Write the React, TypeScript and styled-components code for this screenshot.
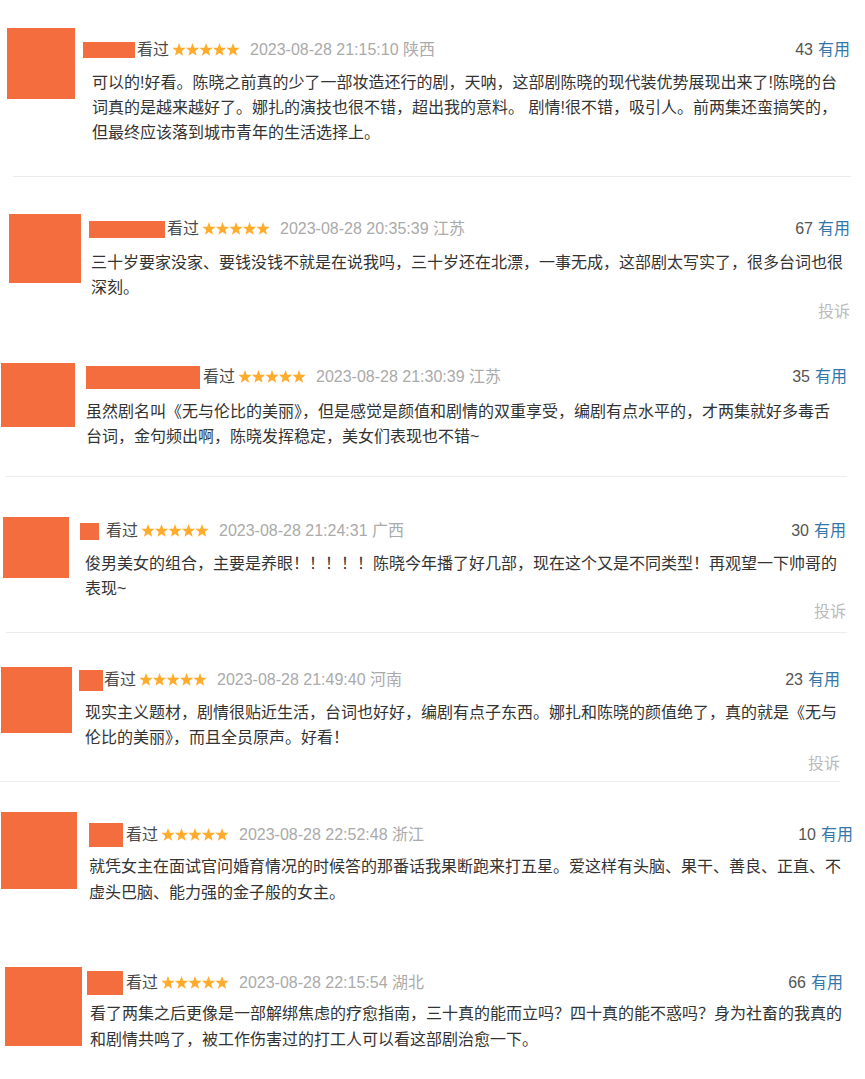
import React from "react";
import styled, { createGlobalStyle } from "styled-components";

const GlobalStyle = createGlobalStyle`
  html, body {
    margin: 0;
    padding: 0;
    background: #fff;
  }
`;

const Page = styled.div`
  width: 865px;
  height: 1079px;
  overflow: hidden;
  background: #fff;
  font-family: "Liberation Sans", "Noto Sans CJK SC", sans-serif;
  font-size: 16px;
  color: #333;
`;

const ReviewItem = styled.section<{ $height: number }>`
  display: flex;
  align-items: flex-start;
  height: ${(p) => p.$height}px;
  box-sizing: border-box;
`;

const Avatar = styled.div<{ $w: number; $h: number; $left: number; $top: number }>`
  flex: none;
  width: ${(p) => p.$w}px;
  height: ${(p) => p.$h}px;
  margin-left: ${(p) => p.$left}px;
  margin-top: ${(p) => p.$top}px;
  background: #f46d3f;
`;

const Main = styled.div<{ $left: number; $top: number; $right: number }>`
  flex: 1;
  display: flex;
  flex-direction: column;
  margin-left: ${(p) => p.$left}px;
  margin-top: ${(p) => p.$top}px;
  padding-right: ${(p) => p.$right}px;
  min-width: 0;
`;

const Header = styled.div<{ $shift: number }>`
  display: flex;
  align-items: center;
  height: 20px;
  line-height: 20px;
  margin-left: ${(p) => p.$shift}px;
  white-space: nowrap;
`;

const NameBlock = styled.span<{ $w: number; $h: number }>`
  display: inline-block;
  width: ${(p) => p.$w}px;
  height: ${(p) => p.$h}px;
  background: #f46d3f;
`;

const Watched = styled.span<{ $gap: number }>`
  margin-left: ${(p) => p.$gap}px;
  color: #494949;
`;

const StarRow = styled.svg`
  margin-left: 3px;
  flex: none;
`;

const DateText = styled.span`
  margin-left: 10px;
  color: #aaa;
`;

const Votes = styled.span`
  margin-left: auto;
  color: #555;
`;

const Useful = styled.span`
  margin-left: 5px;
  color: #37a;
`;

const Body = styled.div<{ $gap: number; $lh: number }>`
  margin-top: ${(p) => p.$gap}px;
  line-height: ${(p) => p.$lh}px;
  color: #333;
`;

const Line = styled.div`
  white-space: nowrap;
`;

const Report = styled.div<{ $gap: number }>`
  align-self: flex-end;
  margin-top: ${(p) => p.$gap}px;
  line-height: 20px;
  color: #bbb;
`;

const Divider = styled.div<{ $left: number; $width: number }>`
  height: 1px;
  margin-left: ${(p) => p.$left}px;
  width: ${(p) => p.$width}px;
  background: #ececec;
`;

const STAR = "7,0 8.71,4.65 13.66,4.84 9.76,7.9 11.11,12.66 7,9.9 2.89,12.66 4.24,7.9 0.34,4.84 5.29,4.65";

const Stars: React.FC = () => (
  <StarRow width="68" height="14" viewBox="0 0 68 14">
    {[0, 1, 2, 3, 4].map((i) => (
      <polygon key={i} points={STAR} fill="#ffac2d" transform={`translate(${i * 13.5} 0)`} />
    ))}
  </StarRow>
);

type Review = {
  height: number;
  avatar: { w: number; h: number; left: number; top: number };
  nameX: number;
  name: { w: number; h: number; gap: number };
  bodyX: number;
  headerTop: number;
  bodyGap: number;
  lh: number;
  right: number;
  date: string;
  votes: number;
  lines: string[];
  report?: number;
  divider?: { left: number; right: number };
};

const reviews: Review[] = [
  {
    height: 176,
    avatar: { w: 68, h: 71, left: 7, top: 28 },
    nameX: 83,
    name: { w: 52, h: 16, gap: 2 },
    bodyX: 92,
    headerTop: 40,
    bodyGap: 10,
    lh: 25,
    right: 850,
    date: "2023-08-28 21:15:10 陕西",
    votes: 43,
    lines: [
      "可以的!好看。陈晓之前真的少了一部妆造还行的剧，天呐，这部剧陈晓的现代装优势展现出来了!陈晓的台",
      "词真的是越来越好了。娜扎的演技也很不错，超出我的意料。 剧情!很不错，吸引人。前两集还蛮搞笑的，",
      "但最终应该落到城市青年的生活选择上。",
    ],
    divider: { left: 13, right: 851 },
  },
  {
    height: 163,
    avatar: { w: 72, h: 69, left: 9, top: 37 },
    nameX: 89,
    name: { w: 76, h: 17, gap: 2 },
    bodyX: 91,
    headerTop: 42,
    bodyGap: 11,
    lh: 25,
    right: 850,
    date: "2023-08-28 20:35:39 江苏",
    votes: 67,
    lines: [
      "三十岁要家没家、要钱没钱不就是在说我吗，三十岁还在北漂，一事无成，这部剧太写实了，很多台词也很",
      "深刻。",
    ],
    report: 2,
  },
  {
    height: 136,
    avatar: { w: 74, h: 64, left: 1, top: 23 },
    nameX: 86,
    name: { w: 114, h: 23, gap: 3 },
    bodyX: 86,
    headerTop: 27,
    bodyGap: 12,
    lh: 25,
    right: 847,
    date: "2023-08-28 21:30:39 江苏",
    votes: 35,
    lines: [
      "虽然剧名叫《无与伦比的美丽》，但是感觉是颜值和剧情的双重享受，编剧有点水平的，才两集就好多毒舌",
      "台词，金句频出啊，陈晓发挥稳定，美女们表现也不错~",
    ],
    divider: { left: 6, right: 847 },
  },
  {
    height: 155,
    avatar: { w: 66, h: 61, left: 3, top: 40 },
    nameX: 80,
    name: { w: 19, h: 17, gap: 7 },
    bodyX: 85,
    headerTop: 44,
    bodyGap: 10,
    lh: 25,
    right: 846,
    date: "2023-08-28 21:24:31 广西",
    votes: 30,
    lines: [
      "俊男美女的组合，主要是养眼！！！！！陈晓今年播了好几部，现在这个又是不同类型！再观望一下帅哥的",
      "表现~",
    ],
    report: 1,
    divider: { left: 6, right: 847 },
  },
  {
    height: 148,
    avatar: { w: 71, h: 66, left: 1, top: 34 },
    nameX: 79,
    name: { w: 24, h: 21, gap: 1 },
    bodyX: 85,
    headerTop: 37,
    bodyGap: 10,
    lh: 25,
    right: 840,
    date: "2023-08-28 21:49:40 河南",
    votes: 23,
    lines: [
      "现实主义题材，剧情很贴近生活，台词也好好，编剧有点子东西。娜扎和陈晓的颜值绝了，真的就是《无与",
      "伦比的美丽》，而且全员原声。好看！",
    ],
    report: 4,
    divider: { left: 0, right: 840 },
  },
  {
    height: 163,
    avatar: { w: 76, h: 77, left: 1, top: 30 },
    nameX: 89,
    name: { w: 34, h: 24, gap: 3 },
    bodyX: 89,
    headerTop: 43,
    bodyGap: 9,
    lh: 26,
    right: 853,
    date: "2023-08-28 22:52:48 浙江",
    votes: 10,
    lines: [
      "就凭女主在面试官问婚育情况的时候答的那番话我果断跑来打五星。爱这样有头脑、果干、善良、正直、不",
      "虚头巴脑、能力强的金子般的女主。",
    ],
  },
  {
    height: 134,
    avatar: { w: 77, h: 79, left: 5, top: 22 },
    nameX: 87,
    name: { w: 36, h: 24, gap: 3 },
    bodyX: 90,
    headerTop: 28,
    bodyGap: 8,
    lh: 26,
    right: 843,
    date: "2023-08-28 22:15:54 湖北",
    votes: 66,
    lines: [
      "看了两集之后更像是一部解绑焦虑的疗愈指南，三十真的能而立吗？四十真的能不惑吗？身为社畜的我真的",
      "和剧情共鸣了，被工作伤害过的打工人可以看这部剧治愈一下。",
    ],
  },
];

const ReviewCard: React.FC<{ review: Review }> = ({ review }) => {
  const { avatar, name } = review;
  return (
    <>
      <ReviewItem $height={review.height}>
        <Avatar $w={avatar.w} $h={avatar.h} $left={avatar.left} $top={avatar.top} />
        <Main
          $left={review.bodyX - avatar.left - avatar.w}
          $top={review.headerTop}
          $right={865 - review.right}
        >
          <Header $shift={review.nameX - review.bodyX}>
            <NameBlock $w={name.w} $h={name.h} />
            <Watched $gap={name.gap}>看过</Watched>
            <Stars />
            <DateText>{review.date}</DateText>
            <Votes>
              {review.votes}
              <Useful>有用</Useful>
            </Votes>
          </Header>
          <Body $gap={review.bodyGap} $lh={review.lh}>
            {review.lines.map((line, i) => (
              <Line key={i}>{line}</Line>
            ))}
          </Body>
          {review.report !== undefined && <Report $gap={review.report}>投诉</Report>}
        </Main>
      </ReviewItem>
      {review.divider && (
        <Divider $left={review.divider.left} $width={review.divider.right - review.divider.left} />
      )}
    </>
  );
};

const App: React.FC = () => (
  <Page>
    <GlobalStyle />
    {reviews.map((r, i) => (
      <ReviewCard key={i} review={r} />
    ))}
  </Page>
);

export default App;
